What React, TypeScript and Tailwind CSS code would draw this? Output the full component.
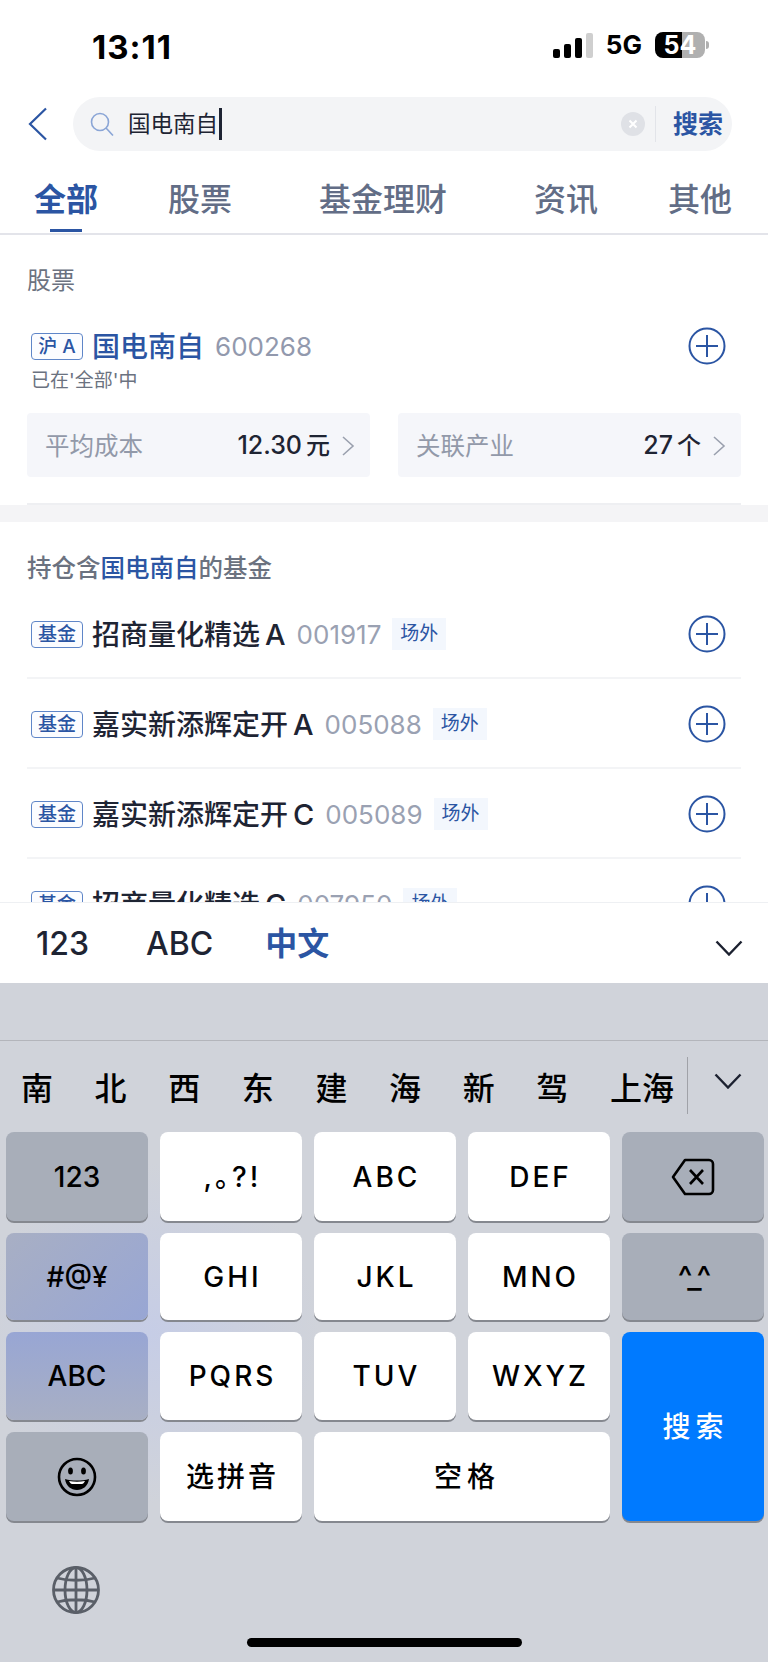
import type { ReactNode } from "react";

const FONT = "font-['Inter','Noto_Sans_CJK_SC',sans-serif]";

function Plus() {
  return (
    <svg width="38" height="38" viewBox="0 0 38 38" fill="none" stroke="#2b55a3" strokeWidth="2">
      <circle cx="19" cy="19" r="17.5" />
      <path d="M8 19h22M19 8v22" />
    </svg>
  );
}

function Chevron({ color = "#9aa0ae" }: { color?: string }) {
  return (
    <svg width="14" height="20" viewBox="0 0 14 20" fill="none" stroke={color} strokeWidth="1.6">
      <path d="M2 1l10 9-10 9" />
    </svg>
  );
}

function Down({ w = 28, h = 16 }: { w?: number; h?: number }) {
  return (
    <svg width={w} height={h} viewBox="0 0 28 16" fill="none" stroke="#1c2130" strokeWidth="2.4">
      <path d="M1.5 1.5L14 14.5 26.5 1.5" />
    </svg>
  );
}

function Tag({ children }: { children: ReactNode }) {
  return (
    <span className="flex h-[27px] w-[52px] shrink-0 items-center justify-center rounded-[4px] border border-[#5f86c8] bg-[#fbfcff] text-[19px] font-medium leading-none text-[#2b55a3]">
      {children}
    </span>
  );
}

function FundRow({ name, suffix, code }: { name: string; suffix: string; code: string }) {
  return (
    <div className="flex h-[90px] items-center border-b-2 border-[#f3f4f6] pl-[4px] pt-[2px]">
      <Tag>基金</Tag>
      <span className="ml-[9px] mt-[2px] text-[28px] font-medium leading-[36px] text-[#1e2433]">
        {name}
        <span className="ml-[5px] text-[29px]">{suffix}</span>
      </span>
      <span className="ml-[11px] mt-[2px] text-[26px] leading-[36px] text-[#9aa1b2]">{code}</span>
      <span className="ml-[11px] flex h-[32px] w-[54px] items-center justify-center bg-[#f3f7fd] text-[19px] text-[#2b55a3]">场外</span>
      <span className="ml-auto mr-[15px] flex">
        <Plus />
      </span>
    </div>
  );
}

function InfoCard({ label, value, unit }: { label: string; value: string; unit: string }) {
  return (
    <div className="flex h-[64px] w-[343px] items-center rounded-[4px] bg-[#f5f6fa] pl-[18px] pr-[15px] pt-[2px]">
      <span className="text-[24.5px] text-[#9299a9]">{label}</span>
      <span className="ml-auto text-[25px] font-medium text-[#1e2433]">{value}</span>
      <span className="ml-[4px] mr-[11px] text-[24px] font-medium text-[#1e2433]">{unit}</span>
      <Chevron />
    </div>
  );
}

function Key({ children, className }: { children: ReactNode; className: string }) {
  return (
    <div className={`flex items-center justify-center rounded-[8px] text-[28px] font-medium leading-none text-black shadow-[0_2px_0_#85888f] ${className}`}>
      {children}
    </div>
  );
}

const white = "bg-white tracking-[3px] pl-[3px]";
const dark = "bg-[#a8aeb9]";

export default function App() {
  return (
    <div className={`flex h-[1662px] w-[768px] flex-col overflow-hidden bg-white ${FONT}`}>
      {/* status bar */}
      <div className="flex h-[97px] items-start">
        <span className="ml-[92px] mt-[27px] text-[33px] font-bold leading-[40px] tracking-[1px] text-black">13:11</span>
        <div className="ml-auto mr-[59px] mt-[32px] flex items-start">
          <svg width="40" height="26" viewBox="0 0 40 26" className="mt-px">
            <rect x="0" y="16" width="7" height="9" rx="2" fill="#000" />
            <rect x="11" y="11" width="7" height="14" rx="2" fill="#000" />
            <rect x="22" y="5" width="7" height="20" rx="2" fill="#000" />
            <rect x="33" y="0" width="7" height="25" rx="2" fill="#cfcfcf" />
          </svg>
          <span className="ml-[13px] text-[26px] font-bold leading-[26px] text-black">5G</span>
          <div className="relative ml-[13px] flex h-[26px] w-[50px] overflow-hidden rounded-[8px]">
            <div className="w-[27px] bg-black" />
            <div className="flex-1 bg-[#b0b0b0]" />
            <span className="absolute inset-0 flex items-center justify-center text-[25px] font-bold leading-none text-white">54</span>
          </div>
          <div className="ml-[1px] mt-[9px] h-[8px] w-[3px] rounded-r-full bg-[#b0b0b0]" />
        </div>
      </div>

      {/* search */}
      <div className="flex h-[54px] items-center">
        <svg width="22" height="34" viewBox="0 0 22 34" fill="none" stroke="#2b55a3" strokeWidth="2.2" className="ml-[27px]">
          <path d="M19 1.5L3 17l16 15.5" />
        </svg>
        <div className="ml-[24px] flex h-[54px] w-[659px] items-center rounded-[27px] bg-[#f3f4f6]">
          <svg width="24" height="24" viewBox="0 0 24 24" fill="none" stroke="#8aa5d6" strokeWidth="1.6" className="ml-[17px]">
            <circle cx="10" cy="10" r="8.5" />
            <path d="M16 16l7 7.5" />
          </svg>
          <span className="ml-[14px] text-[22.5px] leading-none text-[#1e2433]">国电南自</span>
          <div className="ml-[1px] h-[32px] w-[3px] bg-[#1e2433]" />
          <svg width="24" height="24" viewBox="0 0 24 24" className="ml-auto">
            <circle cx="12" cy="12" r="12" fill="#dfe1e6" />
            <path d="M8.5 8.5l7 7M15.5 8.5l-7 7" stroke="#fff" strokeWidth="2" />
          </svg>
          <div className="ml-[10px] h-[36px] w-px bg-[#e2e4e9]" />
          <span className="ml-[17px] mr-[9px] text-[25px] font-semibold leading-none text-[#2b55a3]">搜索</span>
        </div>
      </div>

      {/* tabs */}
      <div className="flex h-[82px] items-start pl-[34px] pt-[27px] text-[32px] font-medium leading-[44px] text-[#626d86]">
        <div className="flex flex-col items-center">
          <span className="font-bold text-[#2b55a3]">全部</span>
          <div className="mt-[7px] h-[3px] w-[32px] bg-[#2b55a3]" />
        </div>
        <span className="ml-[70px]">股票</span>
        <span className="ml-[87px]">基金理财</span>
        <span className="ml-[87px]">资讯</span>
        <span className="ml-[70px]">其他</span>
      </div>
      <div className="h-[2px] bg-[#e3e4ea]" />

      {/* results */}
      <div className="h-[667px] overflow-hidden">
        <div className="px-[27px] pt-[31px]">
          <div className="text-[24px] leading-[30px] text-[#6b7280]">股票</div>
          <div className="mt-[31px] flex h-[38px] items-center pl-[4px]">
            <Tag>沪 A</Tag>
            <span className="ml-[9px] mt-[2px] text-[28px] font-medium leading-none text-[#2b55a3]">国电南自</span>
            <span className="ml-[11px] mt-[2px] text-[26px] leading-none text-[#9299ad]">600268</span>
            <span className="ml-auto mr-[15px] flex">
              <Plus />
            </span>
          </div>
          <div className="mt-[4px] pl-[4px] text-[19px] leading-[24px] text-[#6b7280]">已在'全部'中</div>
          <div className="mt-[20px] flex justify-between">
            <InfoCard label="平均成本" value="12.30" unit="元" />
            <InfoCard label="关联产业" value="27" unit="个" />
          </div>
          <div className="mt-[26px] h-[2px] bg-[#eeeff2]" />
        </div>
        <div className="h-[17px] bg-[#f4f4f6]" />
        <div className="px-[27px] pt-[31px]">
          <div className="mb-[6px] text-[24.5px] font-medium leading-[30px] text-[#6b7280]">
            持仓含<span className="text-[#2b55a3]">国电南自</span>的基金
          </div>
          <FundRow name="招商量化精选" suffix="A" code="001917" />
          <FundRow name="嘉实新添辉定开" suffix="A" code="005088" />
          <FundRow name="嘉实新添辉定开" suffix="C" code="005089" />
          <FundRow name="招商量化精选" suffix="C" code="007950" />
        </div>
      </div>

      {/* input mode bar */}
      <div className="flex h-[81px] items-center border-t border-[#eef0f3] bg-white pl-[36px] pt-[2px] text-[32px] font-medium leading-none text-[#1e2433]">
        <span>123</span>
        <span className="ml-[57px]">ABC</span>
        <span className="ml-[52px] font-semibold text-[#2b55a3]">中文</span>
        <span className="ml-auto mr-[25px] mt-[8px] flex">
          <Down />
        </span>
      </div>

      {/* keyboard */}
      <div className="flex-1 bg-[#d0d3da] bg-[radial-gradient(circle_at_150px_350px,#c6cde6_0,#d0d3da_170px)]">
        <div className="h-[57px]" />
        <div className="h-px bg-[#b3b5bb]" />
        <div className="flex h-[91px] items-start pl-[21px] text-[32px] font-medium leading-[44px] text-black">
          <div className="mt-[26px] flex gap-x-[41.6px]">
            <span>南</span>
            <span>北</span>
            <span>西</span>
            <span>东</span>
            <span>建</span>
            <span>海</span>
            <span>新</span>
            <span>驾</span>
            <span>上海</span>
          </div>
          <div className="ml-[13px] mt-[16px] h-[57px] w-px bg-[#a0a2a8]" />
          <span className="ml-[26px] mt-[32px] flex">
            <Down />
          </span>
        </div>
        <div className="ml-[6px] grid w-[758px] grid-cols-5 grid-rows-[89px_87px_88px_89px] gap-x-[12px] gap-y-[12px]">
          <Key className={dark}>123</Key>
          <Key className={`${white} [font-feature-settings:'halt']`}>,。?!</Key>
          <Key className={white}>ABC</Key>
          <Key className={white}>DEF</Key>
          <Key className={dark}>
            <svg width="44" height="38" viewBox="0 0 44 38" fill="none" stroke="#000" strokeWidth="2.6" strokeLinejoin="round">
              <path d="M14 2h24a4 4 0 0 1 4 4v26a4 4 0 0 1-4 4H14L2 19z" />
              <path d="M19 12l13 14M32 12L19 26" />
            </svg>
          </Key>
          <Key className="bg-[linear-gradient(135deg,#a8afc4_0%,#98a6d4_100%)]">#@¥</Key>
          <Key className={white}>GHI</Key>
          <Key className={white}>JKL</Key>
          <Key className={white}>MNO</Key>
          <Key className={`${dark} text-[31px] font-bold tracking-[-3px]`}>^_^</Key>
          <Key className="bg-[linear-gradient(180deg,#98a6d4_0%,#a8afc4_100%)]">ABC</Key>
          <Key className={white}>PQRS</Key>
          <Key className={white}>TUV</Key>
          <Key className={white}>WXYZ</Key>
          <Key className="row-span-2 bg-[#007aff] pl-[5px] text-[27px] tracking-[5px] text-white">搜索</Key>
          <Key className={dark}>
            <svg width="40" height="40" viewBox="0 0 40 40" fill="none" stroke="#000" strokeWidth="2.6">
              <circle cx="20" cy="20" r="18" />
              <ellipse cx="13.5" cy="14" rx="2.4" ry="3.6" fill="#000" stroke="none" />
              <ellipse cx="26.5" cy="14" rx="2.4" ry="3.6" fill="#000" stroke="none" />
              <path d="M8 22c7 2 17 2 24 0-1 7-6 11-12 11S9 29 8 22z" fill="#000" stroke="none" />
              <path d="M12 24c5 1 11 1 16 0-1 2-2 3-3 3H15c-1 0-2-1-3-3z" fill="#fff" stroke="none" />
            </svg>
          </Key>
          <Key className={`${white} text-[27px]`}>选拼音</Key>
          <Key className="col-span-2 bg-white pl-[10px] text-[27px] tracking-[5px]">空格</Key>
        </div>
        <div className="ml-[52px] mt-[45px] flex">
          <svg width="48" height="48" viewBox="0 0 48 48" fill="none" stroke="#5a5f68" strokeWidth="2.8">
            <circle cx="24" cy="24" r="22.5" />
            <ellipse cx="24" cy="24" rx="11" ry="22.5" />
            <path d="M24 1.5v45M1.5 24h45M5 12c11 3 27 3 38 0M5 36c11-3 27-3 38 0" />
          </svg>
        </div>
        <div className="mx-auto mt-[24px] h-[9px] w-[275px] rounded-full bg-black" />
      </div>
    </div>
  );
}
